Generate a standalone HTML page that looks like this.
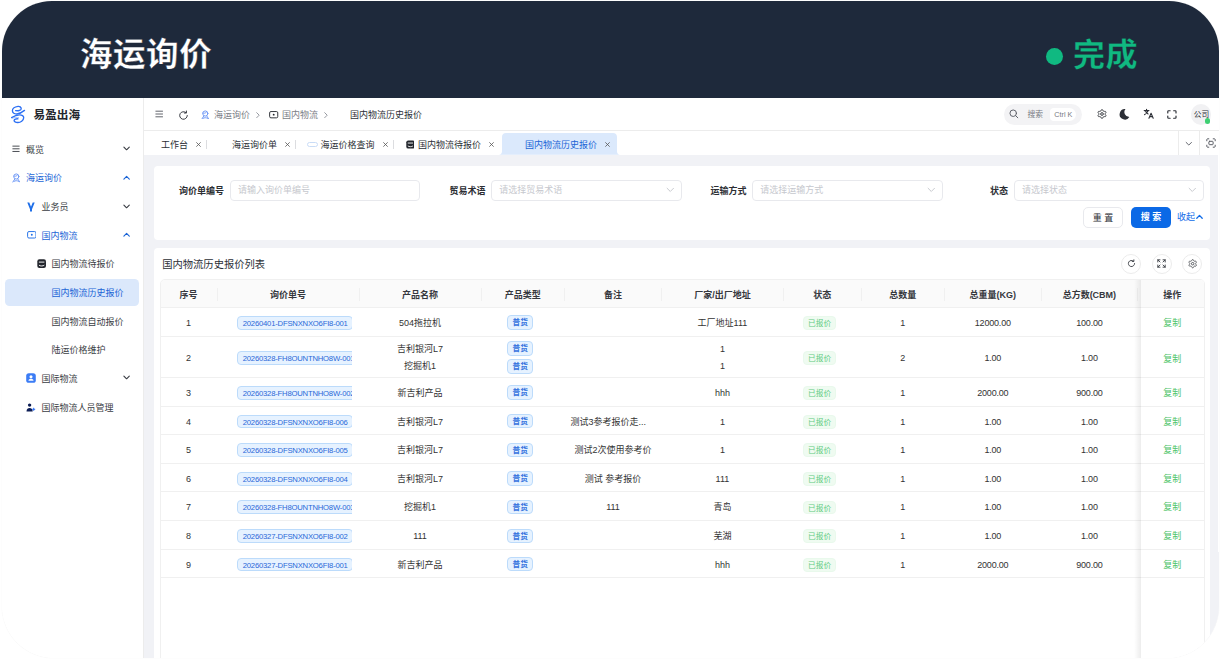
<!DOCTYPE html>
<html lang="zh-CN">
<head>
<meta charset="utf-8">
<title>海运询价 - 国内物流历史报价</title>
<style>
*{box-sizing:border-box;margin:0;padding:0}
html,body{width:1220px;height:660px;overflow:hidden;background:#fff}
body{font-family:"Liberation Sans","Noto Sans CJK SC",sans-serif;font-size:9px;color:#333;position:relative;line-height:1}
.abs{position:absolute}
.card{position:absolute;left:2px;top:1px;width:1217px;height:657.2px;border-radius:50px 50px 52px 52px;overflow:hidden;background:#fff;box-shadow:0 0 1px rgba(0,0,0,.10)}
.banner{position:absolute;left:0;top:0;width:100%;height:96.5px;background:#1e293b}
.banner h1{position:absolute;left:78px;top:32px;font-size:32.5px;font-weight:700;color:#fff;letter-spacing:.55px;line-height:44px;white-space:nowrap;-webkit-text-stroke:.3px #1e293b}
.done{position:absolute;left:1071px;top:31.800px;font-size:32px;font-weight:700;color:#10b981;letter-spacing:.5px;line-height:44px;white-space:nowrap;-webkit-text-stroke:.3px #1e293b}
.dot{position:absolute;left:1044.200px;top:46.500px;width:17px;height:17px;border-radius:50%;background:#10b981}

/* sidebar */
.side{position:absolute;left:0;top:96.5px;width:141.5px;bottom:0;background:#fff;border-right:1px solid #ececec}
.brand{position:absolute;left:32px;top:10px;font-size:11.6px;font-weight:700;color:#23262d;line-height:16px;white-space:nowrap}
.mi{position:absolute;left:3.5px;width:133px;height:27px;border-radius:4.5px;line-height:29px;font-size:9px;color:#3a3d44;white-space:nowrap}
.mi.on{color:#1a64d6}
.mi.on::before{content:"";position:absolute;left:-.8px;top:0;width:134.2px;height:27px;border-radius:4.5px;background:#dbe8fb}
.mi.blue{color:#1a64d6}
.mi span{position:absolute;top:0}
.mi svg{position:absolute}

/* header */
.hdr{position:absolute;left:142px;top:96.5px;right:0;height:33.5px;background:#fff;border-bottom:1px solid #ececec}
.hdr .t{position:absolute;top:0;line-height:35px;font-size:9px;white-space:nowrap}
.g{color:#7b7e86}
.tabs{position:absolute;left:142px;top:130px;right:0;height:24.100px;background:#fff}
.tabs .t{position:absolute;top:0;line-height:28.100px;font-size:9px;color:#2c2f36;white-space:nowrap}
.tabs .x{position:absolute;top:0;line-height:25px;font-size:9px;color:#444}
.sep{position:absolute;top:8.700px;width:1px;height:9.200px;background:#dcdde0}

/* panels */
.panel{position:absolute;background:#fff;border-radius:4px}
.lbl{position:absolute;font-size:9px;font-weight:700;color:#2c2e33;line-height:22px;white-space:nowrap;text-align:right}
.inp{position:absolute;height:20.5px;border:1px solid #e8e9ed;border-radius:4px;background:#fff;font-size:9px;color:#c6c8ce;line-height:19.5px;padding-left:7.300px;white-space:nowrap}
.btn{position:absolute;height:20.5px;border-radius:4px;font-size:9px;line-height:19px;text-align:center;white-space:nowrap}

/* table */
.tbl{position:absolute;left:158px;top:278px;width:1045px;height:400px;border:1px solid #f0f0f0;border-radius:5px 5px 0 0;overflow:hidden;background:#fff}
.th{position:absolute;top:0;height:26.8px;line-height:31px;font-size:9px;font-weight:700;color:#36383e;text-align:center;white-space:nowrap}
.row{position:absolute;left:0;width:100%;border-top:1px solid #f0f0f0}
.c{position:absolute;top:0;height:100%;text-align:center;font-size:9px;color:#333;white-space:nowrap;overflow:hidden}
.tag{display:inline-block;height:14.4px;line-height:13.6px;border:1px solid #bcdbfb;background:#e6f2ff;color:#2a68d8;border-radius:4px;font-size:7.7px;padding:0 4.6px;white-space:nowrap;vertical-align:top;margin-right:5.1px}
.tag.b{color:#3572de;font-weight:700;padding:0 4px;width:26px;text-align:center;margin-right:5.1px}
.tag.code{letter-spacing:-.21px;margin-right:0;height:13.9px;line-height:13.4px}
.tagg{display:inline-block;height:13.8px;line-height:13px;border:1px solid #e9f9ec;background:#effbf1;color:#62cb80;border-radius:4px;font-size:7.7px;width:33.1px;text-align:center;white-space:nowrap;vertical-align:top;margin-right:5.1px}
.lnk{color:#4fc46a}
</style>
</head>
<body>
<div class="card">
  <div class="banner">
    <h1>海运询价</h1>
    <div class="dot"></div>
    <div class="done">完成</div>
  </div>

  <div class="abs" style="left:142px;top:150px;width:1073.700px;height:402px;background:#f1f2f6"></div>
  <div class="abs" style="left:142px;top:551px;width:1076px;height:110px;background:#f1f2f6"></div>
  <!--SIDEBAR-->
  <div class="side">
    <!-- logo -->
    <svg class="abs" style="left:8px;top:7.5px" width="17" height="19" viewBox="0 0 17 19" fill="none" stroke="#2c70f4" stroke-width="1.35" stroke-linecap="round">
      <path d="M5.600 5.600C8 6 11 5.500 11.200 4 11.400 2 9.500 1.200 8 1.400 5 1.800 2.400 3.500 2.400 5.800 2.400 8 4.500 9.200 7 9 10 8.700 12.500 7 14.500 5.400"/>
      <path d="M1.600 12.600C4 11 7 9.800 9.500 9.800 12 9.800 13.800 11 13.700 12.800 13.600 15.500 10.500 17.600 7.700 17.500 5.500 17.400 4 16.500 4.100 15.600 4.200 14.500 6 13.600 8 13.800"/>
      <path d="M2.600 13.300C4.500 12.300 6.500 12.100 8.600 12.600" stroke-width=".7" stroke="#7ea6f8"/>
    </svg>
    <div class="brand" style="left:31.600px;top:9.200px">易盈出海</div>

    <div class="mi" style="top:38px">
      <svg style="left:6px;top:9.700px" width="8" height="7.600" preserveAspectRatio="none" viewBox="0 0 9 8" stroke="#3a3d44" stroke-width="1" fill="none"><path d="M.5 1.2h8M.5 4h8M.5 6.8h8"/></svg>
      <span style="left:20.5px">概览</span>
      <svg style="left:117.700px;top:10.800px" width="7.200" height="5.400" viewBox="0 0 8 6" stroke="#3a3d44" stroke-width="1.25" fill="none" stroke-linecap="round" stroke-linejoin="round"><path d="M1 1.2l3 3 3-3"/></svg>
    </div>

    <div class="mi blue" style="top:66.7px">
      <svg style="left:6.300px;top:9.200px" width="8.600" height="9.600" viewBox="0 0 10 11" stroke="#6a95f5" stroke-width="1.100" fill="none" stroke-linecap="round" stroke-linejoin="round"><circle cx="5" cy="4" r="3"/><path d="M2.200 3.600c1.200.3 3 .2 4.200-1.300M3.200 7l-2.200 3.400M6.800 7l2.200 3.400M2.400 9.600c1.600-1 3.600-1 5.200 0"/></svg>
      <span style="left:20.5px">海运询价</span>
      <svg style="left:117.700px;top:10.700px" width="7.200" height="5.400" viewBox="0 0 8 6" stroke="#1a64d6" stroke-width="1.25" fill="none" stroke-linecap="round" stroke-linejoin="round"><path d="M1 4.6l3-3 3 3"/></svg>
    </div>

    <div class="mi" style="top:95.3px">
      <svg style="left:21.600px;top:8.800px" width="8" height="10" viewBox="0 0 8 10" fill="#1f6fe8"><path d="M.3.5h2l1.7 4.2L5.7.5h2L5 7.2V9.5H3V7.2z"/></svg>
      <span style="left:36px">业务员</span>
      <svg style="left:117.700px;top:10.800px" width="7.200" height="5.400" viewBox="0 0 8 6" stroke="#3a3d44" stroke-width="1.25" fill="none" stroke-linecap="round" stroke-linejoin="round"><path d="M1 1.2l3 3 3-3"/></svg>
    </div>

    <div class="mi blue" style="top:124px">
      <svg style="left:21.200px;top:9.900px" width="9.600" height="7.600" viewBox="0 0 10 8" fill="none" stroke="#1f6fe8" stroke-width="1"><rect x=".6" y=".6" width="8.8" height="6.8" rx="1.4"/><circle cx="5" cy="4" r="1" fill="#1f6fe8" stroke="none"/></svg>
      <span style="left:36px">国内物流</span>
      <svg style="left:117.700px;top:10.700px" width="7.200" height="5.400" viewBox="0 0 8 6" stroke="#1a64d6" stroke-width="1.25" fill="none" stroke-linecap="round" stroke-linejoin="round"><path d="M1 4.6l3-3 3 3"/></svg>
    </div>

    <div class="mi" style="top:152.6px">
      <svg style="left:31.200px;top:9.200px" width="9.300" height="9.300" viewBox="0 0 9 9"><rect x=".3" y=".3" width="8.4" height="8.4" rx="2" fill="#23262d"/><path d="M2.2 3h4.6M2.2 6.2c1 .8 3.6.8 4.6 0" stroke="#fff" stroke-width=".9" fill="none" stroke-linecap="round"/></svg>
      <span style="left:46px">国内物流待报价</span>
    </div>

    <div class="mi on" style="top:181.3px">
      <span style="left:46px">国内物流历史报价</span>
    </div>

    <div class="mi" style="top:210px">
      <span style="left:46px">国内物流自动报价</span>
    </div>

    <div class="mi" style="top:238.6px">
      <span style="left:46px">陆运价格维护</span>
    </div>

    <div class="mi" style="top:267.2px">
      <svg style="left:20.5px;top:8.5px" width="10" height="10" viewBox="0 0 10 10"><rect x=".2" y=".2" width="9.6" height="9.6" rx="2.6" fill="#3b7cf5"/><circle cx="5" cy="3.8" r="1.5" fill="#fff"/><path d="M2.4 7.8c.3-1.6 1.4-2.1 2.6-2.1s2.3.5 2.6 2.1z" fill="#fff"/></svg>
      <span style="left:36px">国际物流</span>
      <svg style="left:117.700px;top:10.800px" width="7.200" height="5.400" viewBox="0 0 8 6" stroke="#3a3d44" stroke-width="1.25" fill="none" stroke-linecap="round" stroke-linejoin="round"><path d="M1 1.2l3 3 3-3"/></svg>
    </div>

    <div class="mi" style="top:296px">
      <svg style="left:20px;top:9px" width="10" height="9" viewBox="0 0 10 9" fill="#0c1d55"><circle cx="3.600" cy="2.100" r="1.700"/><path d="M.5 8.400c.2-2.400 1.400-3.400 3.100-3.400s2.900 1 3.100 3.400z"/><path d="M7.700 4.800v3M6.200 6.300h3" stroke="#2a6df4" stroke-width="1" fill="none"/></svg>
      <span style="left:36px">国际物流人员管理</span>
    </div>
  </div>
  <!--/SIDEBAR-->

  <!--HEADER-->
  <div class="hdr">
    <svg class="abs" style="left:11.400px;top:12.900px" width="8.400" height="8" preserveAspectRatio="none" viewBox="0 0 9 8" stroke="#4a4d55" stroke-width=".9" fill="none"><path d="M.5 1.2h8M.5 4h8M.5 6.8h8"/></svg>
    <svg class="abs" style="left:34px;top:12px" width="11" height="11" viewBox="0 0 11 11" stroke="#3a3d44" stroke-width="1" fill="none" stroke-linecap="round" stroke-linejoin="round"><path d="M9.3 5.5A3.8 3.8 0 1 1 8 2.6"/><path d="M8.4 1v2h-2"/></svg>
    <svg class="abs" style="left:57.2px;top:12.2px" width="8.6" height="9.6" viewBox="0 0 10 11" stroke="#6a95f5" stroke-width="1.1" fill="none" stroke-linecap="round" stroke-linejoin="round"><circle cx="5" cy="4" r="3"/><path d="M2.2 3.600c1.200.3 3 .2 4.200-1.300M3.200 7l-2.200 3.400M6.800 7l2.200 3.400M2.400 9.600c1.600-1 3.600-1 5.200 0"/></svg>
    <div class="t g" style="left:69.9px">海运询价</div>
    <svg class="abs" style="left:112.3px;top:14.3px" width="4" height="6.4" viewBox="0 0 4 6.4" fill="none" stroke="#8a8d95" stroke-width=".9" stroke-linecap="round" stroke-linejoin="round"><path d="M.7.700l2.500 2.500-2.500 2.500"/></svg>
    <svg class="abs" style="left:125.3px;top:13.8px" width="9.4" height="7.4" viewBox="0 0 10 8" fill="none" stroke="#23262d" stroke-width="1"><rect x=".6" y=".6" width="8.8" height="6.8" rx="1.4"/><circle cx="5" cy="4" r="1" fill="#23262d" stroke="none"/></svg>
    <div class="t g" style="left:138px">国内物流</div>
    <svg class="abs" style="left:180.3px;top:14.3px" width="4" height="6.4" viewBox="0 0 4 6.4" fill="none" stroke="#8a8d95" stroke-width=".9" stroke-linecap="round" stroke-linejoin="round"><path d="M.7.700l2.500 2.500-2.500 2.500"/></svg>
    <div class="t" style="left:206px;color:#2c2f36">国内物流历史报价</div>

    <!-- search pill -->
    <div class="abs" style="left:860px;top:6.5px;width:77.7px;height:21px;border-radius:10.5px;background:#f3f3f5"></div>
    <svg class="abs" style="left:865.2px;top:11.8px" width="9.6" height="9.6" viewBox="0 0 10 10" stroke="#5a5d65" stroke-width="1" fill="none" stroke-linecap="round"><circle cx="4.4" cy="4.4" r="3.4"/><path d="M7 7l2.2 2.2"/></svg>
    <div class="t" style="left:883.6px;font-size:7.7px;color:#777a82;line-height:34.4px">搜索</div>
    <div class="abs" style="left:906px;top:10.5px;width:26.2px;height:13.2px;border-radius:4px 6.6px 6.6px 4px;background:#fff"></div>
    <div class="t" style="left:910.3px;font-size:7.2px;color:#777a82;line-height:34.4px">Ctrl K</div>

    <!-- gear -->
    <svg class="abs" style="left:953.2px;top:11.7px" width="10" height="10" viewBox="0 0 24 24" stroke="#2c2f36" stroke-width="2.2" fill="none" stroke-linejoin="round"><path d="M12.00 1.50 L12.90 1.66 L13.73 2.16 L14.33 3.31 L14.74 4.47 L15.22 5.09 L15.75 5.50 L16.37 5.75 L17.15 5.86 L18.36 5.64 L19.65 5.58 L20.50 6.05 L21.09 6.75 L21.40 7.61 L21.39 8.58 L20.69 9.67 L19.89 10.61 L19.60 11.34 L19.50 12.00 L19.60 12.66 L19.89 13.39 L20.69 14.33 L21.39 15.42 L21.40 16.39 L21.09 17.25 L20.50 17.95 L19.65 18.42 L18.36 18.36 L17.15 18.14 L16.37 18.25 L15.75 18.50 L15.22 18.91 L14.74 19.53 L14.33 20.69 L13.73 21.84 L12.90 22.34 L12.00 22.50 L11.10 22.34 L10.27 21.84 L9.67 20.69 L9.26 19.53 L8.78 18.91 L8.25 18.50 L7.63 18.25 L6.85 18.14 L5.64 18.36 L4.35 18.42 L3.50 17.95 L2.91 17.25 L2.60 16.39 L2.61 15.42 L3.31 14.33 L4.11 13.39 L4.40 12.66 L4.50 12.00 L4.40 11.34 L4.11 10.61 L3.31 9.67 L2.61 8.58 L2.60 7.61 L2.91 6.75 L3.50 6.05 L4.35 5.58 L5.64 5.64 L6.85 5.86 L7.63 5.75 L8.25 5.50 L8.78 5.09 L9.26 4.47 L9.67 3.31 L10.27 2.16 L11.10 1.66Z"/><circle cx="12" cy="12" r="3.2"/></svg>
    <!-- moon -->
    <svg class="abs" style="left:974.2px;top:10.3px" width="12.4" height="12.4" viewBox="0 0 24 24" fill="#2c2f36"><path d="M14.5 2A10.2 10.2 0 1 0 22 17.6 9.6 9.6 0 0 1 14.5 2z"/></svg>
    <!-- translate -->
    <svg class="abs" style="left:999px;top:10.9px" width="11.4" height="11.4" viewBox="0 0 24 24" fill="none" stroke="#2c2f36" stroke-width="2.300" stroke-linecap="round" stroke-linejoin="round"><path d="M2.500 5.500h10M7.500 2.500v3M10.500 5.500c-1 4-4 7-7.500 8.500M4.800 5.500c.9 3 3 5.600 6 7"/><path d="M12.500 21.500l4.500-10.500 4.500 10.500M14 18.200h6"/></svg>
    <!-- fullscreen -->
    <svg class="abs" style="left:1023.1px;top:12.3px" width="9.8" height="9" preserveAspectRatio="none" viewBox="0 0 10 10" fill="none" stroke="#2c2f36" stroke-width="1.200" stroke-linecap="round" stroke-linejoin="round"><path d="M.8 3.200V1.600c0-.5.300-.8.800-.8h1.600M6.800.8h1.600c.5 0 .8.300.8.800v1.600M9.200 6.800v1.600c0 .5-.3.800-.8.800H6.800M3.200 9.200H1.600c-.5 0-.8-.3-.8-.8V6.800"/></svg>
    <!-- avatar -->
    <div class="abs" style="left:1047px;top:6.7px;width:20.4px;height:20.4px;border-radius:50%;background:#f1f1f3"></div>
    <div class="t" style="left:1049.8px;font-size:7.7px;color:#2c2f36;line-height:34.5px">公司</div>
    <div class="abs" style="left:1060.7px;top:20.6px;width:5.8px;height:5.8px;border-radius:50%;background:#3ecf72"></div>
  </div>

  <div class="tabs">
    <div class="t" style="left:17px">工作台</div><svg class="abs" style="left:52.2px;top:10.6px" width="5" height="5" viewBox="0 0 5 5" fill="none" stroke="#555" stroke-width=".8" stroke-linecap="round"><path d="M.600.600l3.800 3.800M4.400.600l-3.800 3.800"/></svg>
    <div class="sep" style="left:62px"></div>
    <div class="t" style="left:88px">海运询价单</div><svg class="abs" style="left:140.9px;top:10.6px" width="5" height="5" viewBox="0 0 5 5" fill="none" stroke="#555" stroke-width=".8" stroke-linecap="round"><path d="M.600.600l3.800 3.800M4.400.600l-3.800 3.800"/></svg>
    <div class="sep" style="left:151px"></div>
    <svg class="abs" style="left:163px;top:10.700px" width="11" height="5" viewBox="0 0 11 5" fill="none" stroke="#c9dcf6" stroke-width="1"><rect x=".5" y=".5" width="10" height="4" rx="2"/></svg>
    <div class="t" style="left:176.500px">海运价格查询</div><svg class="abs" style="left:238.8px;top:10.6px" width="5" height="5" viewBox="0 0 5 5" fill="none" stroke="#555" stroke-width=".8" stroke-linecap="round"><path d="M.600.600l3.800 3.800M4.400.600l-3.800 3.800"/></svg>
    <div class="sep" style="left:249px"></div>
    <svg class="abs" style="left:261.500px;top:8.700px" width="8.800" height="9" viewBox="0 0 9 9"><rect x=".3" y=".3" width="8.400" height="8.400" rx="2" fill="#23262d"/><path d="M2.200 3h4.600M2.200 6.200c1 .8 3.600.8 4.600 0" stroke="#fff" stroke-width=".9" fill="none" stroke-linecap="round"/></svg>
    <div class="t" style="left:274px">国内物流待报价</div><svg class="abs" style="left:345.3px;top:10.6px" width="5" height="5" viewBox="0 0 5 5" fill="none" stroke="#555" stroke-width=".8" stroke-linecap="round"><path d="M.600.600l3.800 3.800M4.400.600l-3.800 3.800"/></svg>
    <!-- active tab -->
    <svg class="abs" style="left:354px;top:2.300px" width="127" height="21.800" preserveAspectRatio="none" viewBox="0 0 127 22"><path d="M0 22c3 0 4-1 4-4V4c0-2.500 1.500-4 4-4h107c2.500 0 4 1.500 4 4v14c0 3 1 4 4 4z" fill="#dbe9fc"/></svg>
    <div class="t" style="left:381px;color:#1a64d6">国内物流历史报价</div><svg class="abs" style="left:460.9px;top:10.6px" width="5" height="5" viewBox="0 0 5 5" fill="none" stroke="#555" stroke-width=".8" stroke-linecap="round"><path d="M.600.600l3.800 3.800M4.400.600l-3.800 3.800"/></svg>
    <!-- right tools -->
    <div class="abs" style="left:1033.800px;top:0;width:1px;height:24px;background:#ececec"></div>
    <svg class="abs" style="left:1041px;top:9.500px" width="7.600" height="5.700" viewBox="0 0 8 6" stroke="#5a5d65" stroke-width="1" fill="none" stroke-linecap="round" stroke-linejoin="round"><path d="M1.200 1.500l2.800 2.800 2.800-2.800"/></svg>
    <div class="abs" style="left:1054.900px;top:0;width:1px;height:24px;background:#ececec"></div>
    <svg class="abs" style="left:1061.500px;top:7.400px" width="10" height="10" viewBox="0 0 10 10" fill="none" stroke="#5a5d65" stroke-width="1" stroke-linecap="round" stroke-linejoin="round"><path d="M.8 2.800V1.600c0-.5.300-.8.800-.8h1.200M7.200.8h1.200c.5 0 .8.300.8.800v1.200M9.200 7.200v1.200c0 .5-.3.800-.8.800H7.200M2.800 9.200H1.600c-.5 0-.8-.3-.8-.8V7.200"/><rect x="2.900" y="3.300" width="4.200" height="3.400" rx=".7"/></svg>
  </div>
  <!--/HEADER-->

  <!--SEARCH-->
  <div class="panel" style="left:152.400px;top:165px;width:1055.600px;height:74.100px"></div>
  <div class="lbl" style="left:150px;top:179px;width:72px">询价单编号</div>
  <div class="inp" style="left:227.700px;top:179px;width:190.500px">请输入询价单编号</div>
  <div class="lbl" style="left:420px;top:179px;width:63.500px">贸易术语</div>
  <div class="inp" style="left:489px;top:179px;width:190.500px">请选择贸易术语</div>
  <svg class="abs" style="left:663.700px;top:186.300px" width="8.600" height="6.400" viewBox="0 0 8 6" stroke="#c2c4ca" stroke-width=".85" fill="none" stroke-linecap="round" stroke-linejoin="round"><path d="M1 1.200l3 3 3-3"/></svg>
  <div class="lbl" style="left:680px;top:179px;width:64.500px">运输方式</div>
  <div class="inp" style="left:750px;top:179px;width:191px">请选择运输方式</div>
  <svg class="abs" style="left:925.200px;top:186.300px" width="8.600" height="6.400" viewBox="0 0 8 6" stroke="#c2c4ca" stroke-width=".85" fill="none" stroke-linecap="round" stroke-linejoin="round"><path d="M1 1.200l3 3 3-3"/></svg>
  <div class="lbl" style="left:940px;top:179px;width:66px">状态</div>
  <div class="inp" style="left:1011.800px;top:179px;width:190.600px">请选择状态</div>
  <svg class="abs" style="left:1186.200px;top:186.300px" width="8.600" height="6.400" viewBox="0 0 8 6" stroke="#c2c4ca" stroke-width=".85" fill="none" stroke-linecap="round" stroke-linejoin="round"><path d="M1 1.200l3 3 3-3"/></svg>
  <div class="btn" style="left:1080.500px;top:205.500px;width:40.800px;height:21px;line-height:20px;border-radius:5px;border:1px solid #e8e9ed;background:#fff;color:#2c2f36;letter-spacing:2.500px;text-indent:2.500px">重置</div>
  <div class="btn" style="left:1128.700px;top:205.500px;width:40.600px;height:21px;border-radius:5px;background:#0b69e6;color:#fff;font-weight:700;line-height:21.500px;letter-spacing:2.500px;text-indent:2.500px">搜索</div>
  <div class="abs" style="left:1175px;top:205.500px;font-size:9px;line-height:20.500px;color:#0f6be8;white-space:nowrap">收起</div>
  <svg class="abs" style="left:1194.300px;top:212.800px" width="7" height="5.400" viewBox="0 0 7 5" stroke="#0f6be8" stroke-width="1.300" fill="none" stroke-linecap="round" stroke-linejoin="round"><path d="M.8 4l2.700-2.800L6.200 4"/></svg>

  <div class="panel" style="left:152.400px;top:246.500px;width:1055.600px;height:420px"></div>
  <div class="abs" style="left:160.200px;top:255.500px;font-size:10.300px;line-height:16px;color:#2c2f36;white-space:nowrap">国内物流历史报价列表</div>
  <!-- tool buttons -->
  <div class="abs" style="left:1119.300px;top:252.500px;width:20px;height:20px;border-radius:50%;border:1px solid #ececec;background:#fff"></div>
  <svg class="abs" style="left:1124.800px;top:258px" width="9" height="9" viewBox="0 0 11 11" stroke="#3a3d44" stroke-width="1.100" fill="none" stroke-linecap="round" stroke-linejoin="round"><path d="M9.300 5.500A3.800 3.800 0 1 1 8 2.600"/><path d="M8.400 1v2h-2"/></svg>
  <div class="abs" style="left:1149.800px;top:252.500px;width:20px;height:20px;border-radius:50%;border:1px solid #ececec;background:#fff"></div>
  <svg class="abs" style="left:1155.300px;top:258px" width="9" height="9" viewBox="0 0 9 9" stroke="#3a3d44" stroke-width=".9" fill="none" stroke-linecap="round" stroke-linejoin="round"><path d="M.8 3V.8H3M.8.8l2.200 2.200M6 .8h2.200V3M8.200.8L6 3M8.200 6v2.200H6M8.200 8.200L6 6M3 8.200H.8V6M.8 8.200L3 6"/></svg>
  <div class="abs" style="left:1180.400px;top:252.500px;width:20px;height:20px;border-radius:50%;border:1px solid #ececec;background:#fff"></div>
  <svg class="abs" style="left:1185.7px;top:258.3px" width="9.4" height="9.4" viewBox="0 0 24 24" stroke="#3a3d44" stroke-width="2" fill="none" stroke-linejoin="round"><path d="M12.00 1.50 L12.90 1.66 L13.73 2.16 L14.33 3.31 L14.74 4.47 L15.22 5.09 L15.75 5.50 L16.37 5.75 L17.15 5.86 L18.36 5.64 L19.65 5.58 L20.50 6.05 L21.09 6.75 L21.40 7.61 L21.39 8.58 L20.69 9.67 L19.89 10.61 L19.60 11.34 L19.50 12.00 L19.60 12.66 L19.89 13.39 L20.69 14.33 L21.39 15.42 L21.40 16.39 L21.09 17.25 L20.50 17.95 L19.65 18.42 L18.36 18.36 L17.15 18.14 L16.37 18.25 L15.75 18.50 L15.22 18.91 L14.74 19.53 L14.33 20.69 L13.73 21.84 L12.90 22.34 L12.00 22.50 L11.10 22.34 L10.27 21.84 L9.67 20.69 L9.26 19.53 L8.78 18.91 L8.25 18.50 L7.63 18.25 L6.85 18.14 L5.64 18.36 L4.35 18.42 L3.50 17.95 L2.91 17.25 L2.60 16.39 L2.61 15.42 L3.31 14.33 L4.11 13.39 L4.40 12.66 L4.50 12.00 L4.40 11.34 L4.11 10.61 L3.31 9.67 L2.61 8.58 L2.60 7.61 L2.91 6.75 L3.50 6.05 L4.35 5.58 L5.64 5.64 L6.85 5.86 L7.63 5.75 L8.25 5.50 L8.78 5.09 L9.26 4.47 L9.67 3.31 L10.27 2.16 L11.10 1.66Z"/><circle cx="12" cy="12" r="3.2"/></svg>
  <!--/SEARCH-->
  <!--TABLE-->
  <div class="tbl">
    <div class="abs" style="left:0;top:0;width:100%;height:26.9px;background:#fafafa"></div>
    <div class="th" style="left:-1.0px;width:57.2px">序号</div>
    <div class="th" style="left:56.2px;width:141.8px">询价单号</div>
    <div class="abs" style="left:55.7px;top:7.8px;width:1px;height:13px;background:#f0f0f0"></div>
    <div class="th" style="left:198.0px;width:122.0px">产品名称</div>
    <div class="abs" style="left:197.5px;top:7.8px;width:1px;height:13px;background:#f0f0f0"></div>
    <div class="th" style="left:320.0px;width:83.6px">产品类型</div>
    <div class="abs" style="left:319.5px;top:7.8px;width:1px;height:13px;background:#f0f0f0"></div>
    <div class="th" style="left:403.6px;width:96.8px">备注</div>
    <div class="abs" style="left:403.1px;top:7.8px;width:1px;height:13px;background:#f0f0f0"></div>
    <div class="th" style="left:500.4px;width:122.0px">厂家/出厂地址</div>
    <div class="abs" style="left:499.9px;top:7.8px;width:1px;height:13px;background:#f0f0f0"></div>
    <div class="th" style="left:622.4px;width:77.6px">状态</div>
    <div class="abs" style="left:621.9px;top:7.8px;width:1px;height:13px;background:#f0f0f0"></div>
    <div class="th" style="left:700.0px;width:83.4px">总数量</div>
    <div class="abs" style="left:699.5px;top:7.8px;width:1px;height:13px;background:#f0f0f0"></div>
    <div class="th" style="left:783.4px;width:96.8px">总重量(KG)</div>
    <div class="abs" style="left:782.9px;top:7.8px;width:1px;height:13px;background:#f0f0f0"></div>
    <div class="th" style="left:880.2px;width:96.4px">总方数(CBM)</div>
    <div class="abs" style="left:879.7px;top:7.8px;width:1px;height:13px;background:#f0f0f0"></div>
    <div class="th" style="left:976.6px;width:67.2px">操作</div>
    <div class="abs" style="left:976.1px;top:7.8px;width:1px;height:13px;background:#f0f0f0"></div>
    <div class="row" style="top:26.9px;height:28.6px">
      <div class="c" style="left:-1.0px;width:57.2px;line-height:30.4px">1</div>
      <div class="c" style="left:76.1px;width:114.6px;text-align:left;padding-top:8.0px"><span class="tag code">20260401-DFSNXNXO6FI8-001</span></div>
      <div class="c" style="left:198.0px;width:122.0px;line-height:30.4px">504拖拉机</div>
      <div class="c" style="left:320.0px;width:83.6px;padding-top:7.5px"><span class="tag b">普货</span></div>
      <div class="c" style="left:500.4px;width:122.0px;line-height:30.4px">工厂地址111</div>
      <div class="c" style="left:622.4px;width:77.6px;padding-top:8.3px"><span class="tagg">已报价</span></div>
      <div class="c" style="left:700.0px;width:83.4px;line-height:30.4px">1</div>
      <div class="c" style="left:783.4px;width:96.8px;line-height:30.4px;letter-spacing:-.2px">12000.00</div>
      <div class="c" style="left:880.2px;width:96.4px;line-height:30.4px;letter-spacing:-.2px">100.00</div>
    </div>
    <div class="row" style="top:55.5px;height:41.4px">
      <div class="c" style="left:-1.0px;width:57.2px;line-height:43.1px">2</div>
      <div class="c" style="left:76.1px;width:114.6px;text-align:left;padding-top:14.3px"><span class="tag code">20260328-FH8OUNTNHO8W-001</span></div>
      <div class="c" style="left:198.0px;width:122.0px;line-height:17.1px;padding-top:4.9px">吉利银河L7<br>挖掘机1</div>
      <div class="c" style="left:320.0px;width:83.6px;padding-top:4.9px"><span class="tag b" style="margin-bottom:3.6px">普货</span><br><span class="tag b">普货</span></div>
      <div class="c" style="left:500.4px;width:122.0px;line-height:17.1px;padding-top:4.9px">1<br>1</div>
      <div class="c" style="left:622.4px;width:77.6px;padding-top:14.7px"><span class="tagg">已报价</span></div>
      <div class="c" style="left:700.0px;width:83.4px;line-height:43.1px">2</div>
      <div class="c" style="left:783.4px;width:96.8px;line-height:43.1px;letter-spacing:-.2px">1.00</div>
      <div class="c" style="left:880.2px;width:96.4px;line-height:43.1px;letter-spacing:-.2px">1.00</div>
    </div>
    <div class="row" style="top:96.9px;height:28.6px">
      <div class="c" style="left:-1.0px;width:57.2px;line-height:30.4px">3</div>
      <div class="c" style="left:76.1px;width:114.6px;text-align:left;padding-top:8.0px"><span class="tag code">20260328-FH8OUNTNHO8W-002</span></div>
      <div class="c" style="left:198.0px;width:122.0px;line-height:30.4px">新吉利产品</div>
      <div class="c" style="left:320.0px;width:83.6px;padding-top:7.5px"><span class="tag b">普货</span></div>
      <div class="c" style="left:500.4px;width:122.0px;line-height:30.4px">hhh</div>
      <div class="c" style="left:622.4px;width:77.6px;padding-top:8.3px"><span class="tagg">已报价</span></div>
      <div class="c" style="left:700.0px;width:83.4px;line-height:30.4px">1</div>
      <div class="c" style="left:783.4px;width:96.8px;line-height:30.4px;letter-spacing:-.2px">2000.00</div>
      <div class="c" style="left:880.2px;width:96.4px;line-height:30.4px;letter-spacing:-.2px">900.00</div>
    </div>
    <div class="row" style="top:125.5px;height:28.6px">
      <div class="c" style="left:-1.0px;width:57.2px;line-height:30.4px">4</div>
      <div class="c" style="left:76.1px;width:114.6px;text-align:left;padding-top:8.0px"><span class="tag code">20260328-DFSNXNXO6FI8-006</span></div>
      <div class="c" style="left:198.0px;width:122.0px;line-height:30.4px">吉利银河L7</div>
      <div class="c" style="left:320.0px;width:83.6px;padding-top:7.5px"><span class="tag b">普货</span></div>
      <div class="c" style="left:500.4px;width:122.0px;line-height:30.4px">1</div>
      <div class="c" style="left:403.6px;width:96.8px;line-height:30.4px;text-align:left;padding-left:5.9px">测试3参考报价走...</div>
      <div class="c" style="left:622.4px;width:77.6px;padding-top:8.3px"><span class="tagg">已报价</span></div>
      <div class="c" style="left:700.0px;width:83.4px;line-height:30.4px">1</div>
      <div class="c" style="left:783.4px;width:96.8px;line-height:30.4px;letter-spacing:-.2px">1.00</div>
      <div class="c" style="left:880.2px;width:96.4px;line-height:30.4px;letter-spacing:-.2px">1.00</div>
    </div>
    <div class="row" style="top:154.1px;height:28.6px">
      <div class="c" style="left:-1.0px;width:57.2px;line-height:30.4px">5</div>
      <div class="c" style="left:76.1px;width:114.6px;text-align:left;padding-top:8.0px"><span class="tag code">20260328-DFSNXNXO6FI8-005</span></div>
      <div class="c" style="left:198.0px;width:122.0px;line-height:30.4px">吉利银河L7</div>
      <div class="c" style="left:320.0px;width:83.6px;padding-top:7.5px"><span class="tag b">普货</span></div>
      <div class="c" style="left:500.4px;width:122.0px;line-height:30.4px">1</div>
      <div class="c" style="left:403.6px;width:96.8px;line-height:30.4px">测试2次使用参考价</div>
      <div class="c" style="left:622.4px;width:77.6px;padding-top:8.3px"><span class="tagg">已报价</span></div>
      <div class="c" style="left:700.0px;width:83.4px;line-height:30.4px">1</div>
      <div class="c" style="left:783.4px;width:96.8px;line-height:30.4px;letter-spacing:-.2px">1.00</div>
      <div class="c" style="left:880.2px;width:96.4px;line-height:30.4px;letter-spacing:-.2px">1.00</div>
    </div>
    <div class="row" style="top:182.7px;height:28.6px">
      <div class="c" style="left:-1.0px;width:57.2px;line-height:30.4px">6</div>
      <div class="c" style="left:76.1px;width:114.6px;text-align:left;padding-top:8.0px"><span class="tag code">20260328-DFSNXNXO6FI8-004</span></div>
      <div class="c" style="left:198.0px;width:122.0px;line-height:30.4px">吉利银河L7</div>
      <div class="c" style="left:320.0px;width:83.6px;padding-top:7.5px"><span class="tag b">普货</span></div>
      <div class="c" style="left:500.4px;width:122.0px;line-height:30.4px">111</div>
      <div class="c" style="left:403.6px;width:96.8px;line-height:30.4px">测试 参考报价</div>
      <div class="c" style="left:622.4px;width:77.6px;padding-top:8.3px"><span class="tagg">已报价</span></div>
      <div class="c" style="left:700.0px;width:83.4px;line-height:30.4px">1</div>
      <div class="c" style="left:783.4px;width:96.8px;line-height:30.4px;letter-spacing:-.2px">1.00</div>
      <div class="c" style="left:880.2px;width:96.4px;line-height:30.4px;letter-spacing:-.2px">1.00</div>
    </div>
    <div class="row" style="top:211.4px;height:28.6px">
      <div class="c" style="left:-1.0px;width:57.2px;line-height:30.4px">7</div>
      <div class="c" style="left:76.1px;width:114.6px;text-align:left;padding-top:8.0px"><span class="tag code">20260328-FH8OUNTNHO8W-003</span></div>
      <div class="c" style="left:198.0px;width:122.0px;line-height:30.4px">挖掘机1</div>
      <div class="c" style="left:320.0px;width:83.6px;padding-top:7.5px"><span class="tag b">普货</span></div>
      <div class="c" style="left:500.4px;width:122.0px;line-height:30.4px">青岛</div>
      <div class="c" style="left:403.6px;width:96.8px;line-height:30.4px">111</div>
      <div class="c" style="left:622.4px;width:77.6px;padding-top:8.3px"><span class="tagg">已报价</span></div>
      <div class="c" style="left:700.0px;width:83.4px;line-height:30.4px">1</div>
      <div class="c" style="left:783.4px;width:96.8px;line-height:30.4px;letter-spacing:-.2px">1.00</div>
      <div class="c" style="left:880.2px;width:96.4px;line-height:30.4px;letter-spacing:-.2px">1.00</div>
    </div>
    <div class="row" style="top:240.0px;height:28.6px">
      <div class="c" style="left:-1.0px;width:57.2px;line-height:30.4px">8</div>
      <div class="c" style="left:76.1px;width:114.6px;text-align:left;padding-top:8.0px"><span class="tag code">20260327-DFSNXNXO6FI8-002</span></div>
      <div class="c" style="left:198.0px;width:122.0px;line-height:30.4px">111</div>
      <div class="c" style="left:320.0px;width:83.6px;padding-top:7.5px"><span class="tag b">普货</span></div>
      <div class="c" style="left:500.4px;width:122.0px;line-height:30.4px">芜湖</div>
      <div class="c" style="left:622.4px;width:77.6px;padding-top:8.3px"><span class="tagg">已报价</span></div>
      <div class="c" style="left:700.0px;width:83.4px;line-height:30.4px">1</div>
      <div class="c" style="left:783.4px;width:96.8px;line-height:30.4px;letter-spacing:-.2px">1.00</div>
      <div class="c" style="left:880.2px;width:96.4px;line-height:30.4px;letter-spacing:-.2px">1.00</div>
    </div>
    <div class="row" style="top:268.6px;height:28.6px">
      <div class="c" style="left:-1.0px;width:57.2px;line-height:30.4px">9</div>
      <div class="c" style="left:76.1px;width:114.6px;text-align:left;padding-top:8.0px"><span class="tag code">20260327-DFSNXNXO6FI8-001</span></div>
      <div class="c" style="left:198.0px;width:122.0px;line-height:30.4px">新吉利产品</div>
      <div class="c" style="left:320.0px;width:83.6px;padding-top:7.5px"><span class="tag b">普货</span></div>
      <div class="c" style="left:500.4px;width:122.0px;line-height:30.4px">hhh</div>
      <div class="c" style="left:622.4px;width:77.6px;padding-top:8.3px"><span class="tagg">已报价</span></div>
      <div class="c" style="left:700.0px;width:83.4px;line-height:30.4px">1</div>
      <div class="c" style="left:783.4px;width:96.8px;line-height:30.4px;letter-spacing:-.2px">2000.00</div>
      <div class="c" style="left:880.2px;width:96.4px;line-height:30.4px;letter-spacing:-.2px">900.00</div>
    </div>
    <div class="row" style="top:297.2px;height:1px"></div>
    <div class="abs" style="left:972.6px;top:0;width:7px;height:100%;background:linear-gradient(to left,rgba(0,0,0,.07),rgba(0,0,0,0))"></div>
    <div class="abs" style="left:979.6px;top:0;width:63.4px;height:100%;background:#fff"></div>
    <div class="abs" style="left:979.6px;top:0;width:63.4px;height:26.9px;background:#fafafa"></div>
    <div class="th" style="left:979.6px;width:63.4px">操作</div>
    <div class="abs lnk" style="left:979.6px;top:26.9px;width:63.4px;height:28.6px;border-top:1px solid #f0f0f0;line-height:31.4px;text-align:center;font-size:9px">复制</div>
    <div class="abs lnk" style="left:979.6px;top:55.5px;width:63.4px;height:41.4px;border-top:1px solid #f0f0f0;line-height:44.1px;text-align:center;font-size:9px">复制</div>
    <div class="abs lnk" style="left:979.6px;top:96.9px;width:63.4px;height:28.6px;border-top:1px solid #f0f0f0;line-height:31.4px;text-align:center;font-size:9px">复制</div>
    <div class="abs lnk" style="left:979.6px;top:125.5px;width:63.4px;height:28.6px;border-top:1px solid #f0f0f0;line-height:31.4px;text-align:center;font-size:9px">复制</div>
    <div class="abs lnk" style="left:979.6px;top:154.1px;width:63.4px;height:28.6px;border-top:1px solid #f0f0f0;line-height:31.4px;text-align:center;font-size:9px">复制</div>
    <div class="abs lnk" style="left:979.6px;top:182.7px;width:63.4px;height:28.6px;border-top:1px solid #f0f0f0;line-height:31.4px;text-align:center;font-size:9px">复制</div>
    <div class="abs lnk" style="left:979.6px;top:211.4px;width:63.4px;height:28.6px;border-top:1px solid #f0f0f0;line-height:31.4px;text-align:center;font-size:9px">复制</div>
    <div class="abs lnk" style="left:979.6px;top:240.0px;width:63.4px;height:28.6px;border-top:1px solid #f0f0f0;line-height:31.4px;text-align:center;font-size:9px">复制</div>
    <div class="abs lnk" style="left:979.6px;top:268.6px;width:63.4px;height:28.6px;border-top:1px solid #f0f0f0;line-height:31.4px;text-align:center;font-size:9px">复制</div>
    <div class="abs" style="left:979.6px;top:297.2px;width:63.4px;height:1px;background:#f0f0f0"></div>
  </div>
  <!--/TABLE-->
</div>
</body>
</html>
